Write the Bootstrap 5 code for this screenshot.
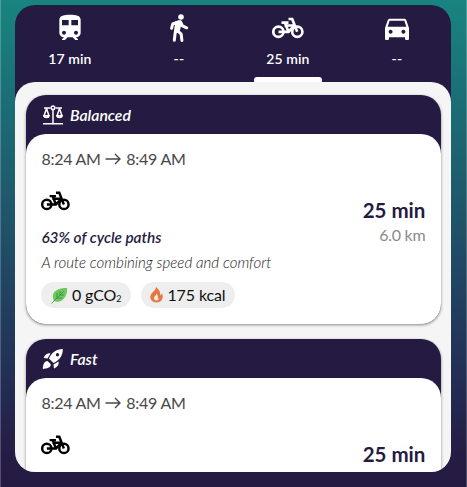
<!DOCTYPE html>
<html lang="en">
<head>
<meta charset="utf-8">
<meta name="viewport" content="width=device-width, initial-scale=1">
<title>Routes</title>
<link href="https://cdn.jsdelivr.net/npm/bootstrap@5.3.0/dist/css/bootstrap.min.css" rel="stylesheet">
<style>
:root{--ink:#251b42}
html,body{height:100%}
body{font-family:Lato,"Liberation Sans",sans-serif;background:linear-gradient(180deg,#18847f 0,#1b6e76 100px,#1e5b6c 190px,#21405f 300px,#233056 370px,#251c44 455px,#251b42 100%);border:solid rgba(255,255,255,.22);border-width:0 1px;overflow:hidden;line-height:1}
svg{display:block;flex:none}
.panel{width:436px;height:467px;margin:5px 0 0 14.4px;border-radius:20px;background:var(--ink)}
.tabs{height:77px;flex:none}
.mode{width:109px;color:#fff;padding-top:7px}
.mode span{font-size:14px;font-weight:600;line-height:20px;margin-top:5px;letter-spacing:.1px}
.mode i{width:68px;height:5px;background:#fff;border-radius:3px 3px 0 0;margin-top:8px}
.results{background:#f5f5f5;border-radius:20px 20px 0 0;padding:13px 10.5px 0}
.route{background:var(--ink);border-radius:20px;height:229px;margin-bottom:15px;box-shadow:0 1px 3px rgba(0,0,0,.45)}
.route-head{height:39px;padding-left:16px;color:#fff;flex:none}
.route-head span{font-size:15.8px;font-weight:600;font-style:italic;margin-left:6px}
.route-body{background:#fff;border-radius:20px;padding:0 15.5px}
.times{font-size:16px;color:#484848;line-height:20px;margin-top:15px;white-space:nowrap;letter-spacing:-.25px}
.times svg{margin:0 4px 0 3.5px}
.leg{margin-top:22px}
.duration{font-size:20.5px;font-weight:700;color:var(--ink);line-height:26px;margin-top:6px}
.distance{font-size:16px;color:#8b8b8b;line-height:20px;margin-top:2px;letter-spacing:-.25px}
.cycle-share{font-size:15.4px;font-weight:600;font-style:italic;color:var(--ink);line-height:20px}
.summary{font-size:15.1px;font-weight:300;font-style:italic;color:#222;line-height:20px;margin-top:5px;white-space:nowrap}
.chips{gap:10px;margin-top:10px}
.chip{height:26px;border-radius:13px;background:#eee;font-size:16px;color:#111;white-space:nowrap;padding:0 9.5px;letter-spacing:-.1px}
.chip span{margin-left:4px}
.chip sub{font-size:9px;bottom:-1px}
</style>
<script src="https://cdn.jsdelivr.net/npm/bootstrap@5.3.0/dist/js/bootstrap.bundle.min.js"></script>
</head>
<body class="d-flex align-items-start">
<svg width="0" height="0" class="position-absolute">
<symbol id="bike" viewBox="0 0 32 22"><g fill="none" stroke="currentColor" stroke-width="2.7"><circle cx="6.4" cy="14.8" r="5.1"/><circle cx="25.3" cy="14.8" r="5.1"/><path d="M6.5 14.8h10L22.5 8.500M13 6l3.500 8.800M9.500 5.600H16.500M12.500 8.500H23M16.500 2H20.200L25.200 14.800"/></g></symbol>
</svg>
<main class="panel overflow-hidden d-flex flex-column">
<nav class="tabs d-flex">
<div class="mode d-flex flex-column align-items-center"><svg width="32" height="32" viewBox="0 0 24 24" fill="#fff"><path d="M12 2c-4 0-8 .5-8 4v9.5C4 17.43 5.57 19 7.5 19L6 20.5v.5h2.23l2-2H14l2 2h2v-.5L16.5 19c1.93 0 3.5-1.57 3.5-3.5V6c0-3.5-3.58-4-8-4zM7.5 17c-.83 0-1.5-.67-1.5-1.5S6.67 14 7.5 14s1.5.67 1.5 1.5S8.33 17 7.5 17zm3.5-7H6V6h5v4zm2 0V6h5v4h-5zm3.5 7c-.83 0-1.5-.67-1.5-1.5s.67-1.5 1.5-1.5 1.5.67 1.5 1.5-.67 1.5-1.5 1.5z"/></svg><span>17 min</span></div>
<div class="mode d-flex flex-column align-items-center"><svg width="32" height="32" viewBox="0 0 32 32"><circle cx="18" cy="5" r="2.8" fill="#fff"/><path d="M12 9.500L17 8.300l2 2-2.300 9-4.200-1.800z" fill="#fff"/><path d="M15.500 9.800L9.700 12 8.600 16.300M17.500 9.800l2 4 4.200 2M13.700 11l-1.200 7.500L11.300 28.300M13.700 18l4.500 4.200.7 6.200" fill="none" stroke="#fff" stroke-width="3" stroke-linecap="round" stroke-linejoin="round"/></svg><span>--</span></div>
<div class="mode d-flex flex-column align-items-center text-white"><svg width="32" height="32" viewBox="0 -5 32 32"><use href="#bike" width="32" height="22"/></svg><span>25 min</span><i></i></div>
<div class="mode d-flex flex-column align-items-center"><svg width="32" height="32" viewBox="0 0 24 24" fill="#fff"><path d="M18.92 6.01C18.72 5.42 18.16 5 17.5 5h-11c-.66 0-1.21.42-1.42 1.01L3 12v8c0 .55.45 1 1 1h1c.55 0 1-.45 1-1v-1h12v1c0 .55.45 1 1 1h1c.55 0 1-.45 1-1v-8l-2.08-5.99zM7.200 16.300a1.500 1.500 0 1 1 0-3 1.500 1.500 0 0 1 0 3zm9.600 0a1.500 1.500 0 1 1 0-3 1.500 1.500 0 0 1 0 3zM5 11l1.500-4.500h11L19 11H5z"/></svg><span>--</span></div>
</nav>
<section class="results flex-grow-1">
<article class="route d-flex flex-column">
<header class="route-head d-flex align-items-center"><svg width="22" height="20" viewBox="0 0 22 20" fill="none" stroke="#fff" stroke-width="1.5"><path d="M1 18.700h20M11 4v14.500M2 3h6.500M13.500 3H20M4.500 3.500L2 11M4.500 3.500L7 11M17.500 3.500L15 11M17.500 3.500L20 11"/><circle cx="11" cy="2.800" r="1.800"/><path d="M1.800 10.700h5.400c-.4 2.500-5 2.500-5.400 0zM14.800 10.700h5.400c-.4 2.500-5 2.500-5.400 0z"/></svg><span>Balanced</span></header>
<div class="route-body flex-grow-1">
<div class="times d-flex align-items-center">8:24 AM<svg width="18" height="14" viewBox="0 0 18 14" fill="none" stroke="#484848" stroke-width="1.400"><path d="M1.500 7h14M11 2l5 5-5 5"/></svg>8:49 AM</div>
<div class="leg d-flex justify-content-between">
<div><svg width="29" height="20" viewBox="0 0 32 22" class="text-black"><use href="#bike" width="32" height="22"/></svg>
<div class="cycle-share mt-3">63% of cycle paths</div><div class="summary">A route combining speed and comfort</div></div>
<div class="text-end"><div class="duration">25 min</div><div class="distance">6.0 km</div></div>
</div>
<div class="chips d-flex">
<div class="chip d-flex align-items-center"><svg width="17" height="17" viewBox="0 0 17 17"><path d="M3 14C-1 5 6 1 16 1c1 8-5 16-13 13z" fill="#6cc75c"/><path d="M.5 16.500L13 4M6 11V6M6 11h5M9 8V4.500M9 8h4" stroke="#3f8848" stroke-width=".8" fill="none"/></svg><span>0 gCO<sub>2</sub></span></div>
<div class="chip d-flex align-items-center"><svg width="13" height="16" viewBox="0 0 14 17"><path d="M6.500 0c-.4 3.500-2.500 4.500-4.500 6.500C-2 11 1.500 16.500 7 16.500s8-5 6-9.500c-.5 1-1 1.500-2 2C11.500 5 9 2 6.500 0z" fill="#e8773d"/><path d="M7 7c.2 2-2.700 2.500-2.700 5 0 3.500 5.700 3 5.400-.2L8.500 13C8.700 10.500 8.500 8.500 7 7z" fill="#f7eee8"/></svg><span>175 kcal</span></div>
</div>
</div>
</article>
<article class="route d-flex flex-column">
<header class="route-head d-flex align-items-center"><svg width="22" height="22" viewBox="0 0 22 22" fill="#fff"><path fill-rule="evenodd" d="M20.800 1C14 1 9.500 5 7 10.500L11.500 15C17 12.500 21 8 20.800 1zM15.500 5a1.700 1.700 0 1 1 0 3.400 1.700 1.700 0 0 1 0-3.400z"/><path d="M8.500 5.500C5 4.500 3 7 1.500 10L5.500 10.500zM16.500 13.500c1 3.500-1.500 5.500-4.500 7L11.500 16.500zM5.500 13C2 13 1 17 .8 21c4-.2 8-1.200 8-4.700z"/></svg><span>Fast</span></header>
<div class="route-body flex-grow-1">
<div class="times d-flex align-items-center">8:24 AM<svg width="18" height="14" viewBox="0 0 18 14" fill="none" stroke="#484848" stroke-width="1.400"><path d="M1.500 7h14M11 2l5 5-5 5"/></svg>8:49 AM</div>
<div class="leg d-flex justify-content-between">
<svg width="29" height="20" viewBox="0 0 32 22" class="text-black"><use href="#bike" width="32" height="22"/></svg>
<div class="text-end"><div class="duration">25 min</div></div>
</div>
</div>
</article>
</section>
</main>
</body>
</html>
